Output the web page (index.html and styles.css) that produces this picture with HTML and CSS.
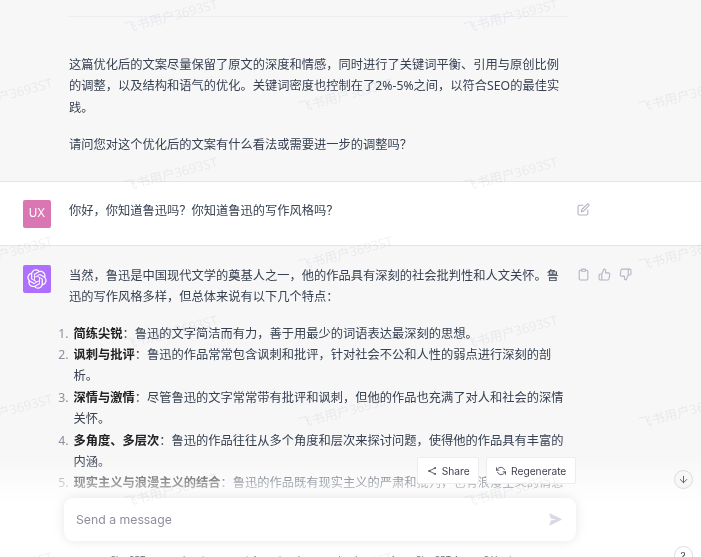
FILE: index.html
```html
<!DOCTYPE html>
<html lang="en">
<head>
    <meta charset="UTF-8">
    <meta name="viewport" content="width=device-width, initial-scale=1.0">
    <title>ChatGPT</title>
    <link rel="stylesheet" href="styles.css">
</head>
<body>
    <div class="page">
        <main class="thread">
            <section class="block block-gray block-top">
                <hr class="rule">
                <p>这篇优化后的文案尽量保留了原文的深度和情感，同时进行了关键词平衡、引用与原创比例的调整，以及结构和语气的优化。关键词密度也控制在了2%-5%之间，以符合SEO的最佳实践。</p>
                <p>请问您对这个优化后的文案有什么看法或需要进一步的调整吗？</p>
            </section>

            <section class="block block-user">
                <div class="avatar avatar-user">UX</div>
                <div class="content">
                    <p>你好，你知道鲁迅吗？你知道鲁迅的写作风格吗？</p>
                </div>
                <div class="tools">
                    <svg class="icon" viewBox="0 0 24 24"><path d="M11 4H4a2 2 0 0 0-2 2v14a2 2 0 0 0 2 2h14a2 2 0 0 0 2-2v-7"/><path d="M18.5 2.5a2.121 2.121 0 0 1 3 3L12 15l-4 1 1-4 9.5-9.5z"/></svg>
                </div>
            </section>

            <section class="block block-gray block-bot">
                <div class="avatar avatar-bot">
                    <svg class="logo" viewBox="0 0 41 41"><path d="M37.5324 16.8707C37.9808 15.5241 38.1363 14.0974 37.9886 12.6859C37.8409 11.2744 37.3934 9.91076 36.676 8.68622C35.6126 6.83404 33.9882 5.3676 32.0373 4.4985C30.0864 3.62941 27.9098 3.40259 25.8215 3.85078C24.8796 2.7893 23.7219 1.94125 22.4257 1.36341C21.1295 0.785575 19.7249 0.491269 18.3058 0.500197C16.1708 0.495044 14.0893 1.16803 12.3614 2.42214C10.6335 3.67624 9.34853 5.44666 8.6917 7.47815C7.30085 7.76286 5.98686 8.3414 4.8377 9.17505C3.68854 10.0087 2.73073 11.0782 2.02839 12.312C0.956464 14.1591 0.498905 16.2988 0.721698 18.4228C0.944492 20.5467 1.83612 22.5449 3.268 24.1293C2.81966 25.4759 2.66413 26.9026 2.81182 28.3141C2.95951 29.7256 3.40701 31.0892 4.12437 32.3138C5.18791 34.1659 6.8123 35.6322 8.76321 36.5013C10.7141 37.3704 12.8907 37.5973 14.9789 37.1492C15.9208 38.2107 17.0786 39.0587 18.3747 39.6366C19.6709 40.2144 21.0755 40.5087 22.4946 40.4998C24.6307 40.5054 26.7133 39.8321 28.4418 38.5772C30.1704 37.3223 31.4556 35.5506 32.1119 33.5179C33.5027 33.2332 34.8167 32.6547 35.9659 31.821C37.115 30.9874 38.0728 29.9178 38.7752 28.684C39.8458 26.8371 40.3023 24.6979 40.0789 22.5748C39.8556 20.4517 38.9639 18.4544 37.5324 16.8707ZM22.4978 37.8849C20.7443 37.8874 19.0459 37.2733 17.6994 36.1501C17.7601 36.117 17.8666 36.0586 17.936 36.0161L25.9004 31.4156C26.1003 31.3019 26.2663 31.137 26.3813 30.9378C26.4964 30.7386 26.5563 30.5124 26.5549 30.2825V19.0542L29.9213 20.998C29.9389 21.0068 29.9541 21.0198 29.9656 21.0359C29.977 21.052 29.9842 21.0707 29.9867 21.0902V30.3889C29.9842 32.375 29.1946 34.2791 27.7909 35.6841C26.3872 37.0892 24.4838 37.8806 22.4978 37.8849ZM6.39227 31.0064C5.51397 29.4888 5.19742 27.7107 5.49804 25.9832C5.55718 26.0187 5.66048 26.0818 5.73461 26.1244L13.699 30.7248C13.8975 30.8408 14.1233 30.902 14.3532 30.902C14.583 30.902 14.8088 30.8408 15.0073 30.7248L24.731 25.1103V28.9979C24.7321 29.0177 24.7283 29.0376 24.7199 29.0556C24.7115 29.0736 24.6988 29.0893 24.6829 29.1012L16.6317 33.7497C14.9096 34.7416 12.8643 35.0097 10.9447 34.4954C9.02506 33.9811 7.38785 32.7263 6.39227 31.0064ZM4.29707 13.6194C5.17156 12.0998 6.55279 10.9364 8.19885 10.3327C8.19885 10.4013 8.19491 10.5228 8.19491 10.6071V19.808C8.19351 20.0378 8.25334 20.2638 8.36823 20.4629C8.48312 20.6619 8.64893 20.8267 8.84863 20.9404L18.5723 26.5542L15.206 28.4979C15.1894 28.5089 15.1703 28.5155 15.1505 28.5173C15.1307 28.5191 15.1107 28.516 15.0924 28.5082L7.04046 23.8557C5.32135 22.8601 4.06716 21.2235 3.55289 19.3046C3.03862 17.3858 3.30624 15.3413 4.29707 13.6194ZM31.955 20.0556L22.2312 14.4411L25.5976 12.4981C25.6142 12.4872 25.6333 12.4805 25.6531 12.4787C25.6729 12.4769 25.6928 12.4801 25.7111 12.4879L33.7631 17.1364C34.9967 17.849 36.0017 18.8982 36.6606 20.1613C37.3194 21.4244 37.6047 22.849 37.4832 24.2684C37.3617 25.6878 36.8382 27.0432 35.9743 28.1759C35.1103 29.3086 33.9415 30.1717 32.6047 30.6641C32.6047 30.5947 32.6047 30.4733 32.6047 30.3889V21.188C32.6066 20.9586 32.5474 20.7328 32.4332 20.5338C32.319 20.3348 32.154 20.1698 31.955 20.0556ZM35.3055 15.0128C35.2464 14.9765 35.1431 14.9142 35.069 14.8717L27.1045 10.2712C26.906 10.1554 26.6803 10.0943 26.4504 10.0943C26.2206 10.0943 25.9948 10.1554 25.7963 10.2712L16.0726 15.8858V11.9982C16.0715 11.9783 16.0753 11.9585 16.0837 11.9405C16.0921 11.9225 16.1048 11.9068 16.1207 11.8949L24.1719 7.25025C25.4053 6.53903 26.8158 6.19376 28.2383 6.25482C29.6608 6.31589 31.0364 6.78077 32.2044 7.59508C33.3723 8.40939 34.2842 9.53945 34.8334 10.8531C35.3826 12.1667 35.5464 13.6095 35.3055 15.0128ZM14.2424 21.9419L10.8752 19.9981C10.8576 19.9893 10.8423 19.9763 10.8309 19.9602C10.8195 19.9441 10.8122 19.9254 10.8098 19.9058V10.6071C10.8107 9.18295 11.2173 7.78848 11.9819 6.58696C12.7466 5.38544 13.8377 4.42659 15.1275 3.82264C16.4173 3.21869 17.8524 2.99464 19.2649 3.1767C20.6775 3.35876 22.0089 3.93941 23.1034 4.85067C23.0427 4.88379 22.937 4.94215 22.8668 4.98473L14.9024 9.58517C14.7025 9.69878 14.5366 9.86356 14.4215 10.0626C14.3065 10.2616 14.2466 10.4877 14.2479 10.7175L14.2424 21.9419ZM16.071 17.9991L20.4018 15.4978L24.7325 17.9975V22.9985L20.4018 25.4983L16.071 22.9985V17.9991Z"/></svg>
                </div>
                <div class="content">
                    <p>当然，鲁迅是中国现代文学的奠基人之一，他的作品具有深刻的社会批判性和人文关怀。鲁迅的写作风格多样，但总体来说有以下几个特点：</p>
                    <ol class="points">
                        <li><strong>简练尖锐</strong>：鲁迅的文字简洁而有力，善于用最少的词语表达最深刻的思想。</li>
                        <li><strong>讽刺与批评</strong>：鲁迅的作品常常包含讽刺和批评，针对社会不公和人性的弱点进行深刻的剖析。</li>
                        <li><strong>深情与激情</strong>：尽管鲁迅的文字常常带有批评和讽刺，但他的作品也充满了对人和社会的深情关怀。</li>
                        <li><strong>多角度、多层次</strong>：鲁迅的作品往往从多个角度和层次来探讨问题，使得他的作品具有丰富的内涵。</li>
                        <li><strong>现实主义与浪漫主义的结合</strong>：鲁迅的作品既有现实主义的严肃和批判，也有浪漫主义的情感</li>
                    </ol>
                </div>
                <div class="tools">
                    <svg class="icon" viewBox="0 0 24 24"><path d="M16 4h2a2 2 0 0 1 2 2v14a2 2 0 0 1-2 2H6a2 2 0 0 1-2-2V6a2 2 0 0 1 2-2h2"/><rect x="8" y="2" width="8" height="4" rx="1"/></svg>
                    <svg class="icon" viewBox="0 0 24 24"><path d="M14 9V5a3 3 0 0 0-3-3l-4 9v11h11.28a2 2 0 0 0 2-1.7l1.38-9a2 2 0 0 0-2-2.3zM7 22H4a2 2 0 0 1-2-2v-7a2 2 0 0 1 2-2h3"/></svg>
                    <svg class="icon" viewBox="0 0 24 24"><path d="M10 15v4a3 3 0 0 0 3 3l4-9V2H5.72a2 2 0 0 0-2 1.7l-1.38 9a2 2 0 0 0 2 2.3zm7-13h3a2 2 0 0 1 2 2v7a2 2 0 0 1-2 2h-3"/></svg>
                </div>
            </section>
        </main>

        <footer class="composer">
            <div class="actions">
                <button class="btn" type="button">
                    <svg class="btn-icon" viewBox="0 0 24 24"><circle cx="19" cy="5" r="1.5"/><circle cx="5" cy="12" r="1.5"/><circle cx="19" cy="19" r="1.5"/><path d="M7 11 17 6M7 13l10 5"/></svg>
                    Share
                </button>
                <button class="btn" type="button">
                    <svg class="btn-icon" viewBox="0 0 24 24"><polyline points="1 4 1 10 7 10"/><polyline points="23 20 23 14 17 14"/><path d="M20.49 9A9 9 0 0 0 5.64 5.64L1 10m22 4l-4.64 4.36A9 9 0 0 1 3.51 15"/></svg>
                    Regenerate
                </button>
            </div>
            <div class="prompt">
                <span class="placeholder">Send a message</span>
                <svg class="send" viewBox="0 0 16 16"><path d="M.5 1.2a.5.5 0 0 1 .7-.6l14.2 6.9a.5.5 0 0 1 0 .9L1.2 15.4a.5.5 0 0 1-.7-.6L2.2 9.2 9 8 2.2 6.8z"/></svg>
            </div>
            <p class="disclaimer">ChatGPT may produce inaccurate information about people, places, or facts. ChatGPT August 3 Version</p>
        </footer>

        <button class="round round-down" type="button">
            <svg class="round-icon" viewBox="0 0 24 24"><path d="M12 5v14M19 12l-7 7-7-7"/></svg>
        </button>
        <button class="round round-help" type="button">?</button>

        <div class="watermarks">
            <div class="wm-row wm-row-odd"><span>飞书用户3693ST</span><span>飞书用户3693ST</span></div>
            <div class="wm-row wm-row-even"><span>飞书用户3693ST</span><span>飞书用户3693ST</span><span>飞书用户3693ST</span></div>
            <div class="wm-row wm-row-odd"><span>飞书用户3693ST</span><span>飞书用户3693ST</span></div>
            <div class="wm-row wm-row-even"><span>飞书用户3693ST</span><span>飞书用户3693ST</span><span>飞书用户3693ST</span></div>
            <div class="wm-row wm-row-odd"><span>飞书用户3693ST</span><span>飞书用户3693ST</span></div>
            <div class="wm-row wm-row-even"><span>飞书用户3693ST</span><span>飞书用户3693ST</span><span>飞书用户3693ST</span></div>
            <div class="wm-row wm-row-odd"><span>飞书用户3693ST</span><span>飞书用户3693ST</span></div>
            <div class="wm-row wm-row-even"><span>飞书用户3693ST</span><span>飞书用户3693ST</span><span>飞书用户3693ST</span></div>
        </div>
    </div>
</body>
</html>
```

FILE: styles.css
```css
* {
    margin: 0;
    padding: 0;
    box-sizing: border-box;
}

html, body {
    height: 100%;
    overflow: hidden;
    background: #fff;
}

body {
    font-family: Inter, "Noto Sans CJK SC", sans-serif;
    font-size: 12.25px;
    line-height: 21.4px;
    color: #374151;
}

.page {
    position: relative;
    height: 557px;
    overflow: hidden;
    filter: blur(0.45px);
}

.block {
    display: flex;
    border-bottom: 1px solid #e5e5e7;
}

.block-gray {
    background: #f7f7f8;
}

.block-top {
    display: block;
    height: 182px;
    padding: 16px 0 0 69px;
    font-family: "Noto Sans", "Noto Sans CJK SC", sans-serif;
}

.block-top p {
    width: 499px;
    margin-bottom: 15.5px;
}

.rule {
    width: 499px;
    height: 1px;
    border: none;
    background: #ececf1;
    margin-bottom: 37px;
}

.block-user {
    height: 64px;
    padding: 18px 0 0 23px;
    background: #fff;
}

.block-bot {
    height: 400px;
    padding: 19px 0 0 23px;
    border-bottom: none;
}

.avatar {
    flex: none;
    width: 28px;
    height: 28px;
    border-radius: 2px;
    display: flex;
    align-items: center;
    justify-content: center;
    margin-right: 18px;
    color: #fff;
    font-size: 11.5px;
    opacity: 0.95;
}

.avatar-user {
    background: #d96fae;
}

.avatar-bot {
    background: #ab68ff;
}

.logo {
    width: 20px;
    height: 20px;
    fill: #fff;
}

.content {
    flex: none;
    width: 499px;
    font-family: "Noto Sans", "Noto Sans CJK SC", sans-serif;
}

.points {
    margin-top: 14.7px;
    padding-left: 4.5px;
    list-style: none;
    counter-reset: point;
}

.points li {
    position: relative;
    counter-increment: point;
}

.points li::before {
    content: counter(point) ".";
    position: absolute;
    right: 100%;
    margin-right: 5px;
    color: #8e8ea0;
}

.points strong {
    font-weight: 700;
    color: #202123;
}

.tools {
    flex: none;
    display: flex;
    gap: 8px;
    margin-left: 9px;
    height: 16px;
    padding-top: 3px;
}

.icon {
    width: 13px;
    height: 13px;
    fill: none;
    stroke: #b4b4c4;
    stroke-width: 2;
    stroke-linecap: round;
    stroke-linejoin: round;
}

.composer {
    position: absolute;
    left: 0;
    right: 0;
    bottom: 0;
    height: 127px;
    padding: 27px 125px 0 64px;
    background: linear-gradient(180deg, rgba(255, 255, 255, 0) 22%, #fff 58%);
}

.actions {
    display: flex;
    justify-content: flex-end;
    gap: 7px;
    margin-bottom: 14px;
}

.btn {
    display: flex;
    align-items: center;
    gap: 5px;
    height: 27px;
    padding: 0 8.7px;
    background: #fff;
    border: 1px solid #ececf1;
    border-radius: 2px;
    font-family: inherit;
    font-size: 10.2px;
    color: #40414f;
}

.btn-icon {
    width: 10px;
    height: 10px;
    fill: none;
    stroke: #40414f;
    stroke-width: 2;
    stroke-linecap: round;
    stroke-linejoin: round;
}

.prompt {
    display: flex;
    align-items: center;
    justify-content: space-between;
    height: 43px;
    padding: 0 14px 0 12px;
    background: #fff;
    border-radius: 9px;
    box-shadow: 0 0 12px rgba(0, 0, 0, 0.1);
}

.placeholder {
    color: #8e8ea0;
}

.send {
    width: 13px;
    height: 13px;
    fill: #d9d9e3;
}

.disclaimer {
    margin: 12px 0 0 46px;
    width: 440px;
    font-size: 8.4px;
    line-height: 14px;
    white-space: nowrap;
    color: #6e6e80;
}

.round {
    position: absolute;
    left: 673.5px;
    width: 19px;
    height: 19px;
    display: flex;
    align-items: center;
    justify-content: center;
    border: 1px solid #dcdce4;
    border-radius: 50%;
    background: #f7f7f8;
    font-family: inherit;
    font-size: 10px;
    color: #40414f;
}

.round-down {
    top: 470px;
}

.round-help {
    top: 546px;
    background: #fff;
}

.round-icon {
    width: 11px;
    height: 11px;
    fill: none;
    stroke: #565869;
    stroke-width: 2;
    stroke-linecap: round;
    stroke-linejoin: round;
}

.watermarks {
    position: absolute;
    inset: 0;
    overflow: hidden;
    pointer-events: none;
}

.wm-row {
    display: flex;
    gap: 244px;
    height: 79px;
    white-space: nowrap;
    font-family: "Open Sans", "Noto Sans CJK SC", sans-serif;
    font-size: 13px;
    line-height: 30px;
    color: rgba(60, 60, 80, 0.07);
}

.wm-row span {
    flex: none;
    width: 96px;
    transform: rotate(-15deg);
}

.wm-row-odd {
    padding-left: 129px;
}

.wm-row-even {
    margin-left: -36px;
}
```
